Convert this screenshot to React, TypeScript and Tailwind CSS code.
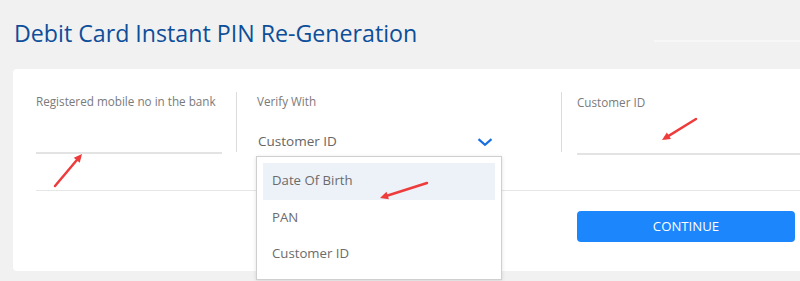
import React from 'react';

function Arrow({ x1, y1, x2, y2 }: { x1: number; y1: number; x2: number; y2: number }) {
    const a = Math.atan2(y2 - y1, x2 - x1);
    const l = 9;
    const w = 0.45;
    const p1 = [x2 - l * Math.cos(a - w), y2 - l * Math.sin(a - w)];
    const p2 = [x2 - l * Math.cos(a + w), y2 - l * Math.sin(a + w)];
    return (
        <g>
            <line x1={x1} y1={y1} x2={x2 - 4 * Math.cos(a)} y2={y2 - 4 * Math.sin(a)} stroke="#ee3b3b" strokeWidth="2.5" strokeLinecap="round" />
            <polygon points={`${x2},${y2} ${p1[0]},${p1[1]} ${p2[0]},${p2[1]}`} fill="#ee3b3b" />
        </g>
    );
}

export default function App() {
    const options = ['Date Of Birth', 'PAN', 'Customer ID'];
    return (
        <div className="relative w-[800px] h-[281px] overflow-hidden bg-[#f1f1f1] font-['Open_Sans',sans-serif]">
            <div className="absolute left-[654px] top-[40px] w-[146px] h-[2px] bg-[#f7f7f7]" />
            <h1 className="pl-[14px] pt-[16px] text-[23.2px] leading-[34px] text-[#0d4e9a]">Debit Card Instant PIN Re-Generation</h1>

            <div className="ml-[13px] mt-[19px] h-[202px] w-[800px] rounded-[4px] bg-white pl-[23px]">
                <div className="flex pt-[24px]">
                    <div className="w-[186px]">
                        <p className="text-[11.7px] leading-[16px] text-[#7a7a7a]">Registered mobile no in the bank</p>
                        <div className="mt-[43px] h-[2px] bg-[#e3e3e3]" />
                    </div>
                    <div className="ml-[14px] w-px h-[60px] -mt-[1px] bg-[#dcdcdc]" />
                    <div className="relative ml-[20px] w-[304px]">
                        <p className="text-[11.7px] leading-[16px] text-[#7a7a7a]">Verify With</p>
                        <div className="mt-[22px] flex items-center justify-between pr-[68px] pl-[1px]">
                            <span className="text-[13.5px] leading-[20px] text-[#666]">Customer ID</span>
                            <svg width="16" height="8" viewBox="0 0 16 8" className="mt-[1px]">
                                <path d="M1.5 1.2 L8 6.8 L14.5 1.2" fill="none" stroke="#1a6fe0" strokeWidth="2.2" />
                            </svg>
                        </div>
                    </div>
                    <div className="w-px h-[60px] -mt-[1px] bg-[#dcdcdc]" />
                    <div className="ml-[15px] flex-1">
                        <p className="text-[11.7px] leading-[16px] text-[#7a7a7a] mt-[1px]">Customer ID</p>
                        <div className="mt-[43px] h-[2px] bg-[#e3e3e3]" />
                    </div>
                </div>
                <div className="mt-[35px] h-px bg-[#e6e6e6]" />
                <div className="mt-[20px] flex">
                    <div className="ml-[541px] w-[218px] h-[31px] rounded-[4px] bg-[#1c86fc] flex items-center justify-center text-white text-[13.2px]">
                        CONTINUE
                    </div>
                </div>
            </div>

            <div className="absolute left-[256px] top-[156px] w-[246px] h-[124px] bg-white border border-[#cfcfcf] shadow-[0_1px_4px_rgba(0,0,0,0.12)] px-[6px] py-[6px]">
                {options.map((o, i) => (
                    <div key={o} className={`h-[36.5px] flex items-center pl-[9px] text-[13.2px] text-[#6b6b6b] ${i === 0 ? 'bg-[#edf2f9]' : ''}`}>
                        {o}
                    </div>
                ))}
            </div>

            <svg className="absolute left-0 top-0 pointer-events-none" width="800" height="281">
                <Arrow x1={55} y1={186} x2={82} y2={154} />
                <Arrow x1={427} y1={183} x2={380} y2={198} />
                <Arrow x1={696} y1={119} x2={662} y2={140} />
            </svg>
        </div>
    );
}
